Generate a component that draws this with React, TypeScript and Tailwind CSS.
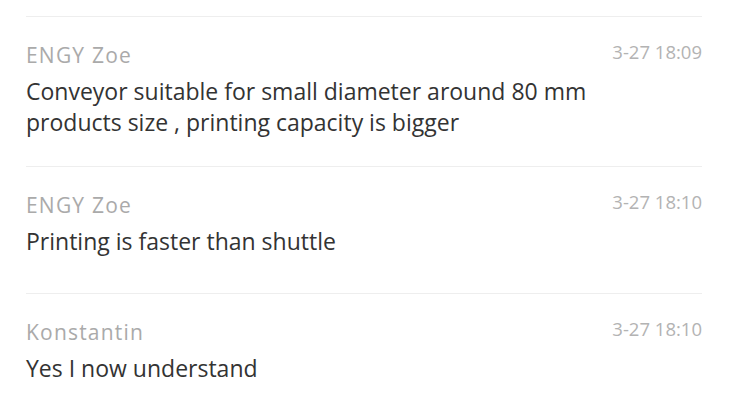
import React from "react";

type Comment = {
  name: string;
  time: string;
  text: string;
  rowClass: string;
};

const comments: Comment[] = [
  {
    name: "ENGY Zoe",
    time: "3-27 18:09",
    text: "Conveyor suitable for small diameter around 80 mm products size , printing capacity is bigger",
    rowClass: "h-[150px]",
  },
  {
    name: "ENGY Zoe",
    time: "3-27 18:10",
    text: "Printing is faster than shuttle",
    rowClass: "h-[127px]",
  },
  {
    name: "Konstantin",
    time: "3-27 18:10",
    text: "Yes I now understand",
    rowClass: "h-[127px]",
  },
];

const App: React.FC = () => {
  return (
    <div className="h-[420px] w-[750px] overflow-hidden bg-white pt-4 font-['Open_Sans',sans-serif]">
      <div className="ml-[26px] w-[676px]">
        {comments.map((c, i) => (
          <div key={i} className={`border-t border-[#eeeeee] pt-[24px] ${c.rowClass}`}>
            <div className="flex items-start justify-between">
              <span className="text-[21px] leading-[28px] tracking-[1.2px] text-[#aaaaaa]">{c.name}</span>
              <span className="-mt-[1px] text-[18.5px] leading-[24px] text-[#b3b3b3]">{c.time}</span>
            </div>
            <p className="mt-[7px] w-[600px] text-[23px] leading-[31px] text-[#333333]">{c.text}</p>
          </div>
        ))}
      </div>
    </div>
  );
};

export default App;
